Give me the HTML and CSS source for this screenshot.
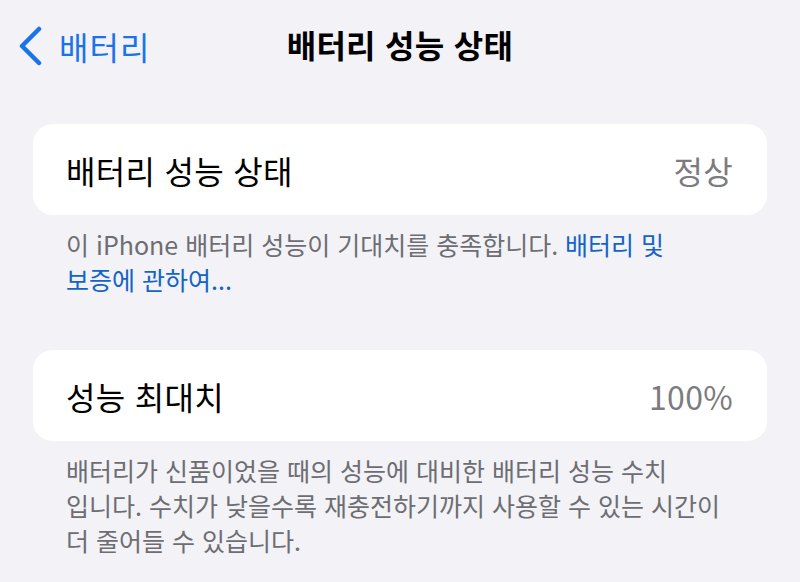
FILE: index.html
```html
<!DOCTYPE html>
<html lang="ko">
<head>
  <meta charset="UTF-8">
  <title>배터리 성능 상태</title>
  <link rel="stylesheet" href="styles.css">
</head>
<body>
  <div class="nav">
    <a class="back" href="#">
      <svg class="chevron" width="26" height="40" viewBox="0 0 26 40">
        <path d="M22 3 L5 20 L22 37" fill="none" stroke="#1a73e8" stroke-width="4.5" stroke-linecap="round" stroke-linejoin="round"/>
      </svg>
      <span>배터리</span>
    </a>
    <h1>배터리 성능 상태</h1>
  </div>

  <div class="card">
    <span class="label">배터리 성능 상태</span>
    <span class="value">정상</span>
  </div>
  <p class="note">이 iPhone 배터리 성능이 기대치를 충족합니다. <a href="#">배터리 및<br>보증에 관하여...</a></p>

  <div class="card">
    <span class="label">성능 최대치</span>
    <span class="value">100%</span>
  </div>
  <p class="note">배터리가 신품이었을 때의 성능에 대비한 배터리 성능 수치<br>입니다. 수치가 낮을수록 재충전하기까지 사용할 수 있는 시간이<br>더 줄어들 수 있습니다.</p>
</body>
</html>
```

FILE: styles.css
```css
body {
  margin: 0;
  padding: 0 33px;
  background: #f2f2f7;
  font-family: "Noto Sans CJK KR", "Noto Sans", sans-serif;
  color: #000;
}

.nav {
  position: relative;
  height: 88px;
  display: flex;
  align-items: center;
  justify-content: center;
  padding-bottom: 4px;
}

.nav h1 {
  margin: 0;
  font-size: 32px;
  font-weight: 700;
  letter-spacing: 0.3px;
}

.back {
  position: absolute;
  left: -16px;
  top: 23px;
  display: flex;
  align-items: center;
  gap: 16px;
  color: #1a73e8;
  text-decoration: none;
  font-size: 32px;
  letter-spacing: 1px;
}

.card {
  margin-top: 32px;
  height: 91px;
  background: #fff;
  border-radius: 20px;
  display: flex;
  align-items: center;
  justify-content: space-between;
  padding: 0 34px 0 33px;
  font-size: 32px;
  letter-spacing: 0.3px;
}

.value {
  color: #7c7c80;
}

.note {
  margin: 12px 0 0;
  padding-left: 33px;
  font-size: 25px;
  line-height: 35px;
  color: #6d6d72;
}

.note a {
  color: #1463c6;
  text-decoration: none;
}

.note + .card {
  margin-top: 53px;
}
```
